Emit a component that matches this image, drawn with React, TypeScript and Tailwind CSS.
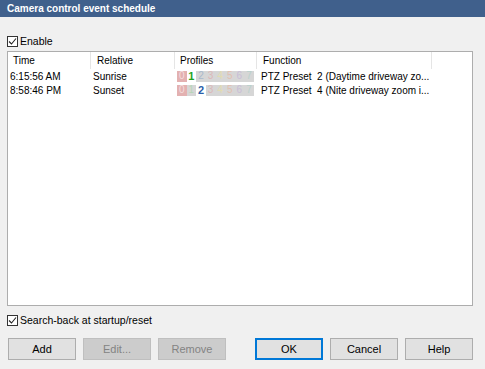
import React from "react";

type Cell = { d: string; bg: string; fg: string; on?: boolean };

const faded = "bg-[#d6d6d6]";

const row1: Cell[] = [
  { d: "0", bg: "bg-[#e3b1b1]", fg: "text-[#f3dede]" },
  { d: "1", bg: "bg-white", fg: "text-[#1fa31f]", on: true },
  { d: "2", bg: faded, fg: "text-[#a9b9cc]" },
  { d: "3", bg: faded, fg: "text-[#dcb8b8]" },
  { d: "4", bg: faded, fg: "text-[#e2dcb0]" },
  { d: "5", bg: faded, fg: "text-[#e2c0b0]" },
  { d: "6", bg: faded, fg: "text-[#c9bdd6]" },
  { d: "7", bg: faded, fg: "text-[#b9d1cc]" },
];

const row2: Cell[] = [
  { d: "0", bg: "bg-[#e3b1b1]", fg: "text-[#f3dede]" },
  { d: "1", bg: faded, fg: "text-[#b6d6b6]" },
  { d: "2", bg: "bg-white", fg: "text-[#2b5ea8]", on: true },
  { d: "3", bg: faded, fg: "text-[#dcb8b8]" },
  { d: "4", bg: faded, fg: "text-[#e2dcb0]" },
  { d: "5", bg: faded, fg: "text-[#e2c0b0]" },
  { d: "6", bg: faded, fg: "text-[#c9bdd6]" },
  { d: "7", bg: faded, fg: "text-[#b9d1cc]" },
];

const events = [
  { time: "6:15:56 AM", rel: "Sunrise", profiles: row1, fn: "PTZ Preset  2 (Daytime driveway zo..." },
  { time: "8:58:46 PM", rel: "Sunset", profiles: row2, fn: "PTZ Preset  4 (Nite driveway zoom i..." },
];

function Check({ label }: { label: string }) {
  return (
    <div className="flex items-center gap-[2px] h-[12px]">
      <div className="w-[11px] h-[11px] border border-[#333] bg-white flex items-center justify-center">
        <svg width="9" height="9" viewBox="0 0 9 9">
          <path d="M1 4.5 L3.5 7 L8 1.5" fill="none" stroke="#222" strokeWidth="1.1" />
        </svg>
      </div>
      <span className="text-[10.5px] text-black leading-none">{label}</span>
    </div>
  );
}

function Btn({ label, disabled, primary }: { label: string; disabled?: boolean; primary?: boolean }) {
  const cls = disabled
    ? "bg-[#cccccc] border border-[#bfbfbf] text-[#838383]"
    : primary
    ? "bg-[#e1e1e1] border-2 border-[#0078d7] text-black"
    : "bg-[#e1e1e1] border border-[#adadad] text-black";
  return (
    <div className={`w-[68px] h-[22px] flex items-center justify-center text-[11px] ${cls}`}>{label}</div>
  );
}

export default function App() {
  return (
    <div
      className="w-[485px] h-[369px] bg-[#f0f0f0] flex flex-col overflow-hidden"
      style={{ fontFamily: '"Liberation Sans", Arial, sans-serif' }}
    >
      <div className="h-[17px] bg-[#40608c] flex items-center px-[7px]">
        <span className="text-white text-[10px] font-bold">Camera control event schedule</span>
      </div>

      <div className="pl-[7px] pr-[12px] flex flex-col">
        <div className="mt-[18px]">
          <Check label="Enable" />
        </div>

        <div className="mt-[4px] h-[255px] bg-white border border-[#adadad] flex flex-col text-[10px] text-black">
          <div className="flex h-[17px] items-center">
            <div className="w-[83px] h-full pl-[5px] flex items-center border-r border-[#e5e5e5]">Time</div>
            <div className="w-[84px] h-full pl-[6px] flex items-center border-r border-[#e5e5e5]">Relative</div>
            <div className="w-[82px] h-full pl-[5px] flex items-center border-r border-[#e5e5e5]">Profiles</div>
            <div className="w-[175px] h-full pl-[6px] flex items-center border-r border-[#e5e5e5]">Function</div>
          </div>
          {events.map((e) => (
            <div key={e.time} className="flex h-[14px] items-center">
              <div className="w-[83px] pl-[2px]">{e.time}</div>
              <div className="w-[84px] pl-[2px]">{e.rel}</div>
              <div className="w-[82px] pl-[2px] flex">
                {e.profiles.map((p) => (
                  <span
                    key={p.d}
                    className={`w-[9.6px] h-[11px] flex items-center justify-center leading-none ${p.bg} ${p.fg} ${
                      p.on ? "font-bold text-[11px]" : ""
                    }`}
                  >
                    {p.d}
                  </span>
                ))}
              </div>
              <div className="w-[175px] pl-[4px] whitespace-pre">{e.fn}</div>
            </div>
          ))}
        </div>

        <div className="mt-[8px]">
          <Check label="Search-back at startup/reset" />
        </div>

        <div className="mt-[12px] flex justify-between">
          <div className="flex gap-[7px] pl-[1px]">
            <Btn label="Add" />
            <Btn label="Edit..." disabled />
            <Btn label="Remove" disabled />
          </div>
          <div className="flex gap-[7px]">
            <Btn label="OK" primary />
            <Btn label="Cancel" />
            <Btn label="Help" />
          </div>
        </div>
      </div>
    </div>
  );
}
